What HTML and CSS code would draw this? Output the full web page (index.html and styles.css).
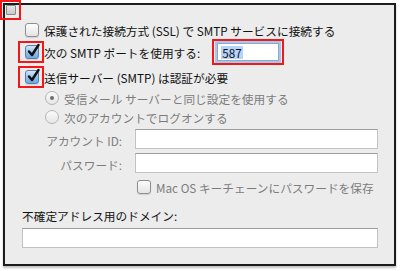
FILE: index.html
```html
<!DOCTYPE html>
<html>
<head>
<meta charset="utf-8">
<link rel="stylesheet" href="styles.css">
</head>
<body>

<!-- marker over the panel corner -->
<div class="corner-mark"><span class="mini-box"></span></div>

<div class="panel">
    <div class="row row-ssl">
        <span class="mark"><span class="check"></span></span>
        <span class="label">保護された接続方式 (SSL) で SMTP サービスに接続する</span>
    </div>
    <div class="row row-port">
        <span class="mark red"><span class="check on"><svg viewBox="0 0 14 14"><path d="M3 7.5 L6 11 L12.5 1" /></svg></span></span>
        <span class="label">次の SMTP ポートを使用する:</span>
        <span class="port-mark"><span class="port-input"><span class="sel">587</span></span></span>
    </div>
    <div class="row row-auth">
        <span class="mark red"><span class="check on"><svg viewBox="0 0 14 14"><path d="M3 7.5 L6 11 L12.5 1" /></svg></span></span>
        <span class="label">送信サーバー (SMTP) は認証が必要</span>
    </div>
    <div class="row row-radio">
        <span class="radio on"></span>
        <span class="label dim">受信メール サーバーと同じ設定を使用する</span>
    </div>
    <div class="row row-radio2">
        <span class="radio"></span>
        <span class="label dim">次のアカウントでログオンする</span>
    </div>
    <div class="row field">
        <span class="field-label dim">アカウント ID:</span>
        <span class="text-input"></span>
    </div>
    <div class="row field field-pass">
        <span class="field-label dim">パスワード:</span>
        <span class="text-input"></span>
    </div>
    <div class="row row-keychain">
        <span class="check"></span>
        <span class="label dim">Mac OS キーチェーンにパスワードを保存</span>
    </div>
    <div class="domain-label">不確定アドレス用のドメイン:</div>
    <div class="text-input domain-input"></div>
</div>

</body>
</html>
```

FILE: styles.css
```css
* {
    box-sizing: border-box;
    margin: 0;
    padding: 0;
}

body {
    font-family: "Noto Sans CJK JP", sans-serif;
    font-size: 11.7px;
    color: #111;
    background: #fff;
    width: 400px;
    height: 271px;
    overflow: hidden;
}

.corner-mark {
    position: absolute;
    top: 0;
    left: 0;
    width: 21px;
    height: 20px;
    border: 2px solid #f01818;
    display: flex;
    align-items: center;
    justify-content: center;
}

.mini-box {
    width: 10px;
    height: 10px;
    border: 1px solid #8a8a8a;
    background: linear-gradient(#e6e6e6, #c9c9c9);
    border-radius: 1px;
}

.panel {
    margin: 3px 4px 0 3px;
    height: 263px;
    border: 2px solid #1c1c1c;
    background: #ececec;
    padding-top: 16px;
    box-shadow: 0 2px 2px rgba(0, 0, 0, 0.25);
}

.row {
    display: flex;
    align-items: center;
}

.row-ssl { height: 18px; }
.row-port { height: 26px; }
.row-auth { height: 24px; }
.row-radio { height: 18px; }
.row-radio2 { height: 20px; }

.mark {
    width: 26px;
    height: 22px;
    margin-left: 13px;
    border: 2px solid transparent;
    padding-left: 5px;
    display: flex;
    align-items: center;
}

.mark.red {
    border-color: #f01818;
}

.check {
    position: relative;
    width: 14px;
    height: 14px;
    border: 1px solid #8e8e8e;
    border-radius: 3px;
    background: linear-gradient(#fdfdfd, #e4e4e4);
    box-shadow: 0 1px 1px rgba(0, 0, 0, 0.12);
    flex-shrink: 0;
}

.check.on {
    border-color: #5a7fa8;
    background: linear-gradient(#d4e8fb, #8fc0ee 55%, #6ea9e4);
}

.check svg {
    position: absolute;
    left: 0;
    top: -2px;
    width: 14px;
    height: 14px;
    overflow: visible;
}

.check path {
    fill: none;
    stroke: #111;
    stroke-width: 2.5;
    stroke-linecap: round;
    stroke-linejoin: round;
}

.label {
    white-space: nowrap;
}

.dim {
    color: #7c7c7c;
}

.port-mark {
    margin-left: 12px;
    width: 72px;
    height: 26px;
    border: 2px solid #f01818;
    padding: 2px 3px;
}

.port-input {
    display: flex;
    align-items: center;
    height: 100%;
    background: #fff;
    border: 1px solid #8aa9cf;
    box-shadow: 0 0 0 2px #a9c6ea;
    padding-left: 3px;
}

.sel {
    background: #b5d4fb;
    padding: 0 1px;
    line-height: 13px;
}

.radio {
    width: 14px;
    height: 14px;
    margin-left: 40px;
    margin-right: 5px;
    border: 1px solid #b4b4b4;
    border-radius: 50%;
    background: linear-gradient(#fafafa, #e6e6e6);
    display: flex;
    align-items: center;
    justify-content: center;
    flex-shrink: 0;
}

.radio.on::after {
    content: "";
    width: 4px;
    height: 4px;
    border-radius: 50%;
    background: #6c6c6c;
}

.field {
    height: 20px;
    margin-top: 2px;
}

.field-pass {
    margin-top: 4px;
}

.field-label {
    width: 117px;
    text-align: right;
    padding-top: 3px;
}

.text-input {
    display: block;
    height: 20px;
    background: #fff;
    border: 1px solid #c2c2c2;
    border-top-color: #9d9d9d;
}

.field .text-input {
    width: 243px;
    margin-left: 13px;
}

.row-keychain {
    height: 16px;
    margin-top: 6px;
}

.row-keychain .check {
    margin-left: 132px;
    margin-right: 5px;
}

.domain-label {
    margin: 13px 0 0 17px;
    line-height: 16px;
}

.domain-input {
    margin: 4px 0 0 17px;
    width: 356px;
}
```
